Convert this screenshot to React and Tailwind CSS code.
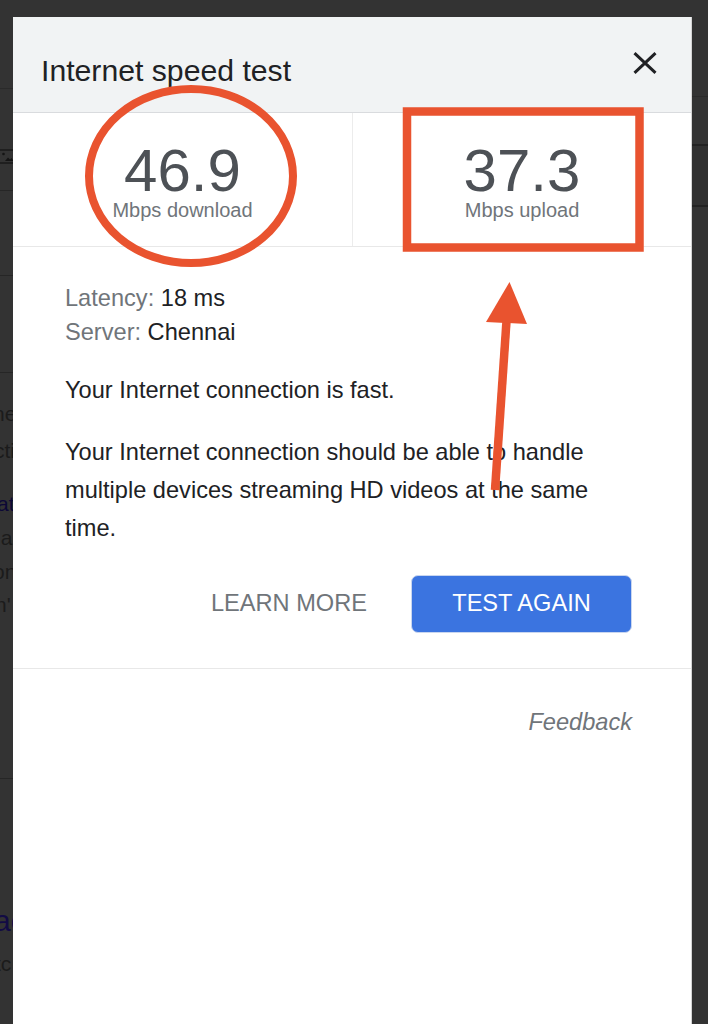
import React from "react";

const F = { fontFamily: '"Liberation Sans", Arial, Helvetica, sans-serif' };

function LeftStrip() {
  return (
    <div className="flex flex-col w-[13px] overflow-hidden bg-[#333333] text-[#1b1b1b]" style={F}>
      <div className="h-[89px] shrink-0 border-b border-[#2a2a2a]" />
      <div className="h-[62px] shrink-0 border-b-2 border-[#1f1f1f]" />
      <div className="h-[13px] shrink-0 border-b-2 border-[#1f1f1f] relative">
        <svg width="13" height="12" viewBox="0 0 13 12" className="block">
          <circle cx="3.5" cy="3" r="1.3" fill="#141414" />
          <path d="M5 10 L8 6.5 L10 8.5 L11.5 7 L13 9 L13 10 Z" fill="#141414" />
        </svg>
      </div>
      <div className="h-[27px] shrink-0 border-b border-[#262626]" />
      <div className="h-[85px] shrink-0 border-b border-[#262626]" />
      <div className="h-[97px] shrink-0 border-b border-[#262626]" />
      <div className="h-[406px] shrink-0 border-b border-[#262626] pt-[24px] text-[21px] whitespace-nowrap">
        <div className="h-[34px] leading-[34px] -ml-[7px]">ne</div>
        <div className="h-[34px] leading-[34px] mt-[3px] -ml-[6px]">cti</div>
        <div className="h-[34px] leading-[34px] mt-[19px] -ml-[3px] text-[#0c0836]">at</div>
        <div className="h-[34px] leading-[34px] -ml-[4px]">la</div>
        <div className="h-[33px] leading-[33px] -ml-[7px]">on</div>
        <div className="h-[34px] leading-[34px] -ml-[5px]">n'</div>
      </div>
      <div className="pt-[122px] whitespace-nowrap">
        <div className="h-[40px] leading-[40px] text-[30px] -ml-[6px] text-[#120b44]">ac</div>
        <div className="h-[34px] leading-[34px] mt-[6px] text-[21px] -ml-[5px]">tc</div>
      </div>
    </div>
  );
}

function RightStrip() {
  return (
    <div className="flex flex-col w-[16px] bg-[#333333]">
      <div className="h-[97px] shrink-0 border-b border-[#2b2b2b]" />
      <div className="h-[49px] shrink-0 border-b-2 border-[#222222]" />
      <div className="h-[61px] shrink-0 border-b-2 border-[#222222] bg-[#303030]" />
    </div>
  );
}

function Panel() {
  return (
    <div className="mt-[17px] flex-1 flex flex-col bg-white border-r border-[#d4d4d4]" style={F}>
      {/* Header */}
      <div className="h-[96px] shrink-0 bg-[#f1f3f4] border-b border-[#d9dbde] flex items-start justify-between pl-[28px] pr-[34px] pt-[36px]">
        <div className="text-[30.2px] leading-[36px] text-[#202124]">Internet speed test</div>
        <svg width="24" height="22" viewBox="0 0 24 22" className="mt-[-1px]">
          <path d="M1.5 1.2 L22.5 20.8 M22.5 1.2 L1.5 20.8" stroke="#202124" strokeWidth="3" fill="none" />
        </svg>
      </div>

      {/* Stats */}
      <div className="h-[134px] shrink-0 grid grid-cols-2 border-b border-[#e8e8e8]">
        <div className="flex flex-col items-center pt-[29px]">
          <div className="text-[60px] leading-[57px] text-[#4d5156]">46.9</div>
          <div className="text-[20px] leading-[22px] text-[#70757a]">Mbps download</div>
        </div>
        <div className="flex flex-col items-center pt-[29px] border-l border-[#ececec]">
          <div className="text-[60px] leading-[57px] text-[#4d5156]">37.3</div>
          <div className="text-[20px] leading-[22px] text-[#70757a]">Mbps upload</div>
        </div>
      </div>

      {/* Body */}
      <div className="shrink-0 pl-[52px] pr-[59px] pt-[34px] pb-[35px] border-b border-[#e8e8e8] text-[23.6px] text-[#202124]">
        <div className="leading-[34px]">
          <div><span className="text-[#70757a]">Latency:</span> 18 ms</div>
          <div><span className="text-[#70757a]">Server:</span> Chennai</div>
        </div>
        <p className="mt-[22px] leading-[38px]">Your Internet connection is fast.</p>
        <p className="mt-[24px] leading-[38px]">
          Your Internet connection should be able to handle multiple devices streaming HD videos at the same time.
        </p>
        <div className="mt-[28px] flex items-center justify-end gap-[22px]">
          <button className="h-[58px] px-[22px] text-[23.6px] text-[#70757a]" style={F}>LEARN MORE</button>
          <button
            className="w-[221px] h-[58px] rounded-[7px] bg-[#3b74e0] border border-[#c9d6ef] text-white text-[23.6px]"
            style={F}
          >
            TEST AGAIN
          </button>
        </div>
      </div>

      {/* Feedback */}
      <div className="pt-[36px] pr-[59px] flex justify-end">
        <div className="text-[23.6px] leading-[34px] italic text-[#70757a]">Feedback</div>
      </div>
    </div>
  );
}

export default function App() {
  return (
    <div className="relative w-[708px] h-[1024px] overflow-hidden bg-[#333333] flex">
      <LeftStrip />
      <div className="w-[679px] flex flex-col">
        <Panel />
      </div>
      <RightStrip />

      <svg
        className="absolute inset-0 pointer-events-none"
        width="708"
        height="1024"
        viewBox="0 0 708 1024"
      >
        <ellipse cx="191" cy="176" rx="102" ry="87" fill="none" stroke="#e9532f" strokeWidth="8" />
        <rect x="407" y="111.5" width="232.5" height="136" fill="none" stroke="#e9532f" strokeWidth="8.5" />
        <path d="M506.5 321 L495 490" stroke="#e9532f" strokeWidth="8.5" fill="none" />
        <polygon points="509.5,282 486,322 527,324" fill="#e9532f" />
      </svg>
    </div>
  );
}
